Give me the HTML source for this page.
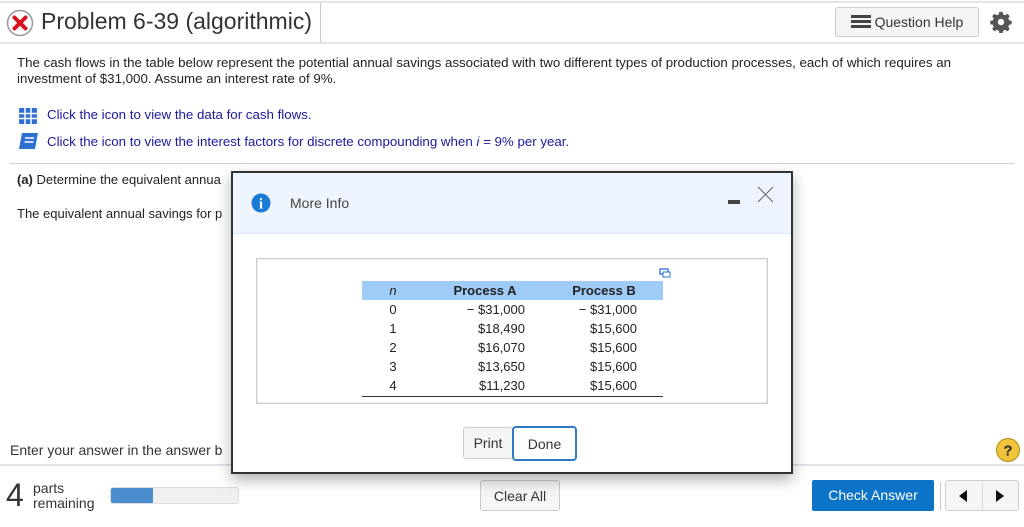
<!DOCTYPE html>
<html><head><style>
body{margin:0;width:1024px;height:527px;background:#fff;font-family:"Liberation Sans",sans-serif;position:relative;overflow:hidden;color:#222}
.a{position:absolute}
.btn{position:absolute;border:1px solid #ccc;border-radius:3px;background:#f5f5f5;text-align:center;font-size:14px;color:#333;box-sizing:border-box}
.col{position:absolute;font-size:13px;line-height:19px}
</style></head><body>
<div class="a" style="left:0;top:1px;width:1024px;height:2px;background:#e2e4ea"></div>
<div class="a" style="left:0;top:42px;width:1024px;height:2px;background:#e2e4ea"></div>
<div class="a" style="left:320px;top:3px;width:1px;height:39px;background:#ccc"></div>
<svg class="a" style="left:5px;top:9px" width="30" height="30"><circle cx="15" cy="14" r="12.5" fill="#fff" stroke="#999" stroke-width="1.5"/><path d="M9.5 8.5l11 11M20.5 8.5l-11 11" stroke="#d9121f" stroke-width="4" stroke-linecap="round"/></svg>
<div class="a" style="left:41px;top:8px;font-size:23px;color:#333">Problem 6-39 (algorithmic)</div>
<div class="btn" style="left:835px;top:7px;width:144px;height:30px;line-height:29px;font-size:14px;background:#f5f5f5"><span style="display:inline-block;width:20px;height:14px;vertical-align:-2px;background:linear-gradient(#444 0 3px,transparent 3px 5px,#444 5px 8px,transparent 8px 10px,#444 10px 13px,transparent 0)"></span> Question Help</div>
<svg class="a" style="left:990px;top:11px" width="22" height="22" viewBox="0 0 24 24"><path fill="#555" d="M10 1h4l.6 3 2.4 1 2.6-1.7 2.8 2.8L20.7 8.7l1 2.4 3 .6v4l-3 .6-1 2.4 1.7 2.6-2.8 2.8-2.6-1.7-2.4 1-.6 3h-4l-.6-3-2.4-1-2.6 1.7-2.8-2.8 1.7-2.6-1-2.4-3-.6v-4l3-.6 1-2.4L1.6 6.1l2.8-2.8L7 5l2.4-1z" transform="scale(.92) translate(1,0)"/><circle cx="12" cy="12" r="3.5" fill="#fff"/></svg>
<div class="a" style="left:17px;top:55px;font-size:13.3px;line-height:16px;width:965px">The cash flows in the table below represent the potential annual savings associated with two different types of production processes, each of which requires an investment of $31,000. Assume an interest rate of 9%.</div>
<svg class="a" style="left:18px;top:107px" width="20" height="18"><rect x="1" y="1" width="18" height="16" fill="#2f6fd1" rx="1"/><path d="M1 6.5h18M1 11.5h18M7 1v16M13 1v16" stroke="#fff" stroke-width="1.5"/></svg>
<div class="a" style="left:47px;top:107px;font-size:13.3px;color:#1a1a9c">Click the icon to view the data for cash flows.</div>
<svg class="a" style="left:18px;top:131px" width="22" height="20"><path d="M4 2h16l-3 16H1z" fill="#2f6fd1"/><path d="M7 7h9M6.5 11h9" stroke="#fff" stroke-width="1.5"/></svg>
<div class="a" style="left:47px;top:134px;font-size:13.3px;color:#1a1a9c">Click the icon to view the interest factors for discrete compounding when <i>i</i> = 9% per year.</div>
<div class="a" style="left:10px;top:163px;width:1004px;height:1px;background:#ccc"></div>
<div class="a" style="left:17px;top:172px;font-size:13px"><b>(a)</b> Determine the equivalent annua</div>
<div class="a" style="left:17px;top:206px;font-size:13px">The equivalent annual savings for p</div>
<div class="a" style="left:10px;top:442px;font-size:14px;color:#333">Enter your answer in the answer b</div>
<svg class="a" style="left:995px;top:437px" width="26" height="26"><circle cx="13" cy="13" r="11.5" fill="#f0c33c" stroke="#b58a16"/><text x="13" y="18.5" text-anchor="middle" font-size="15" font-weight="bold" font-family="Liberation Sans" fill="#222">?</text></svg>
<div class="a" style="left:0;top:464px;width:1024px;height:2px;background:#e2e4ea"></div>
<div class="a" style="left:6px;top:478px;font-size:32px;line-height:34px;color:#333">4</div>
<div class="a" style="left:33px;top:481px;font-size:14px;line-height:15px;color:#333">parts<br>remaining</div>
<div class="a" style="left:110px;top:487px;width:129px;height:17px;background:#f0f0f0;border:1px solid #ddd;border-radius:3px;box-sizing:border-box;overflow:hidden"><div style="width:42px;height:100%;background:#4a8ed0"></div></div>
<div class="btn" style="left:480px;top:480px;width:80px;height:31px;line-height:30px">Clear All</div>
<div class="a" style="left:812px;top:480px;width:122px;height:31px;background:#0b74c8;color:#fff;font-size:14px;text-align:center;line-height:31px;border-radius:2px">Check Answer</div>
<div class="a" style="left:940px;top:482px;width:1px;height:28px;background:#ccc"></div>
<div class="btn" style="left:945px;top:480px;width:74px;height:31px"><div class="a" style="left:36px;top:0;width:1px;height:29px;background:#ddd"></div><div class="a" style="left:13px;top:9px;border:6px solid transparent;border-right:8px solid #111;border-left:0"></div><div class="a" style="left:50px;top:9px;border:6px solid transparent;border-left:8px solid #111;border-right:0"></div></div>
<!-- dialog -->
<div class="a" style="left:231px;top:171px;width:562px;height:303px;background:#fff;border:2px solid #333;box-sizing:border-box;box-shadow:0 6px 14px rgba(0,0,0,.3)">
<div class="a" style="left:0;top:0;width:558px;height:60px;background:#eef4fd;border-bottom:1px solid #dde8f5"></div>
<svg class="a" style="left:18px;top:20px" width="20" height="20"><circle cx="10" cy="10" r="9.5" fill="#1a7bd6"/><text x="10" y="15.5" text-anchor="middle" font-size="15" font-weight="bold" font-family="Liberation Serif" fill="#fff">i</text></svg>
<div class="a" style="left:57px;top:22px;font-size:14px;color:#444">More Info</div>
<div class="a" style="left:495px;top:27px;width:12px;height:4px;background:#444"></div>
<svg class="a" style="left:524px;top:13px" width="17" height="17"><path d="M1 1l15 15M16 1L1 16" stroke="#666" stroke-width="1"/></svg>
<div class="a" style="left:23px;top:85px;width:512px;height:146px;border:1px solid #ccc;box-sizing:border-box;box-shadow:inset 0 0 0 1px #f0f0f0"></div>
<svg class="a" style="left:426px;top:95px" width="12" height="10"><rect x="1" y="1" width="8" height="5" fill="none" stroke="#2f6fd1" stroke-width="1.3"/><rect x="4" y="4" width="7" height="5" fill="#fff" stroke="#2f6fd1" stroke-width="1"/></svg>
<div class="a" style="left:129px;top:108px;width:301px;height:19px;background:#9fcbf7"></div>
<div class="a" style="left:129px;top:223px;width:301px;height:1px;background:#333"></div>
<div class="col" style="left:140px;width:40px;top:108px;text-align:center"><i>n</i><br>0<br>1<br>2<br>3<br>4</div>
<div class="col" style="left:200px;width:104px;top:108px;text-align:center;font-weight:bold">Process A</div>
<div class="col" style="left:316px;width:110px;top:108px;text-align:center;font-weight:bold">Process B</div>
<div class="col" style="left:180px;width:112px;top:127px;text-align:right">− $31,000<br>$18,490<br>$16,070<br>$13,650<br>$11,230</div>
<div class="col" style="left:300px;width:104px;top:127px;text-align:right">− $31,000<br>$15,600<br>$15,600<br>$15,600<br>$15,600</div>
<div class="btn" style="left:230px;top:254px;width:50px;height:32px;line-height:31px">Print</div>
<div class="btn" style="left:279px;top:253px;width:65px;height:35px;line-height:33px;background:#fff;border:2px solid #2d7ac8;border-radius:4px">Done</div>
</div>
</body></html>
